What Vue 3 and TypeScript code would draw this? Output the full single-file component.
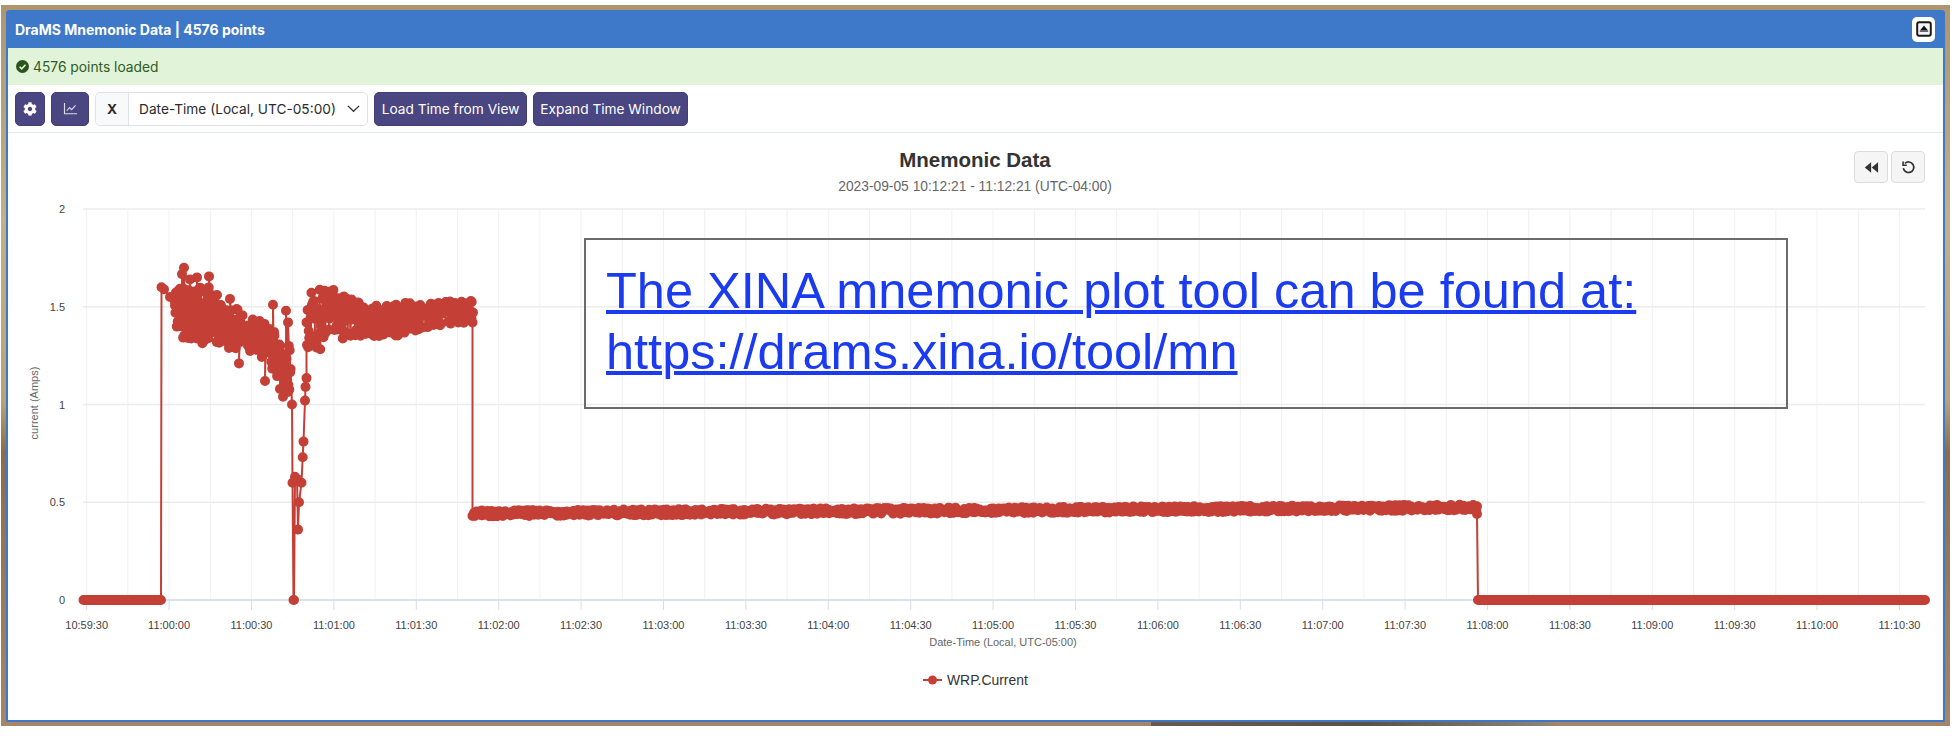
<template>
  <div class="desk">
    <section class="panel">
      <header class="panel-head">
        <span class="panel-title">DraMS Mnemonic Data | 4576 points</span>
        <button class="collapse" type="button" aria-label="Collapse">
          <svg viewBox="0 0 16 16" width="16" height="16">
            <rect x="1.2" y="1.2" width="13.6" height="13.6" rx="2" fill="#f4f4f4" stroke="#1a1a1a" stroke-width="2" />
            <path d="M8 4.6 12 9.6H4Z" fill="#111" />
            <rect x="3.8" y="9.6" width="8.4" height="1.2" fill="#444" />
          </svg>
        </button>
      </header>

      <div class="notice">
        <svg viewBox="0 0 16 16" width="13" height="13">
          <circle cx="8" cy="8" r="8" fill="#2b5320" />
          <path d="M4.4 8.3 7 10.8 11.7 5.8" fill="none" stroke="#e1f3d8" stroke-width="2" />
        </svg>
        <span>{{ pointCount }} points loaded</span>
      </div>

      <div class="toolbar">
        <button class="btn btn-icon" type="button" aria-label="Settings">
          <svg viewBox="0 0 512 512" width="14" height="14">
            <path fill="#fff" d="M487.4 315.7l-42.6-24.6c4.3-23.2 4.3-47 0-70.2l42.6-24.6c4.9-2.8 7.1-8.6 5.5-14-11.1-35.6-30-67.8-54.7-94.6-3.8-4.1-10-5.1-14.8-2.3L380.8 110c-17.9-15.4-38.5-27.3-60.8-35.1V25.8c0-5.6-3.9-10.5-9.4-11.7-36.7-8.2-74.3-7.8-109.2 0-5.5 1.2-9.4 6.1-9.4 11.7V75c-22.2 7.9-42.8 19.8-60.8 35.1L88.7 85.5c-4.9-2.8-11-1.9-14.8 2.3-24.7 26.7-43.6 58.9-54.7 94.6-1.7 5.4.6 11.2 5.5 14L67.3 221c-4.3 23.2-4.3 47 0 70.2l-42.6 24.6c-4.9 2.8-7.1 8.6-5.5 14 11.1 35.6 30 67.8 54.7 94.6 3.8 4.1 10 5.1 14.8 2.3l42.6-24.6c17.9 15.4 38.5 27.3 60.8 35.1v49.2c0 5.6 3.9 10.5 9.4 11.7 36.7 8.2 74.3 7.8 109.2 0 5.5-1.2 9.4-6.1 9.4-11.7v-49.2c22.2-7.9 42.8-19.8 60.8-35.1l42.6 24.6c4.9 2.8 11 1.9 14.8-2.3 24.7-26.7 43.6-58.9 54.7-94.6 1.5-5.5-.7-11.3-5.6-14.1zM256 336c-44.1 0-80-35.9-80-80s35.9-80 80-80 80 35.9 80 80-35.9 80-80 80z" />
          </svg>
        </button>
        <button class="btn btn-icon btn-chart" type="button" aria-label="Chart type">
          <svg viewBox="0 0 16 16" width="15" height="15" fill="none" stroke="#dcdbea" stroke-width="1.2">
            <path d="M1.6 2v11.6H15" />
            <path d="M4 10.4 7 7l2.2 2.2L13.4 4.6" />
          </svg>
        </button>
        <div class="axis-select">
          <span class="axis-tag">X</span>
          <span class="axis-value">Date-Time (Local, UTC-05:00)</span>
          <svg viewBox="0 0 16 16" width="15" height="15" fill="none" stroke="#333" stroke-width="1.4">
            <path d="M2 5.2 8 11l6-5.8" />
          </svg>
        </div>
        <button class="btn" type="button">Load Time from View</button>
        <button class="btn" type="button">Expand Time Window</button>
      </div>

      <div class="chart">
        <svg class="plot" viewBox="8 133 1935 586" width="1935" height="586">
          <g stroke="#f0f1f4" stroke-width="1">
            <line v-for="x in minorTicks" :key="x" :x1="x" :x2="x" y1="209" y2="600" />
          </g>
          <g stroke="#ececee" stroke-width="1.4">
            <line v-for="t in yTicks" :key="t.label" x1="83" x2="1925" :y1="t.y" :y2="t.y" />
          </g>
          <line x1="83" x2="1925" y1="600" y2="600" stroke="#d5ddee" stroke-width="1.5" />
          <g stroke="#d5ddee" stroke-width="1">
            <line v-for="t in xTicks" :key="t.label" :x1="t.x" :x2="t.x" y1="600" y2="610" />
          </g>

          <text class="title" x="975" y="167" text-anchor="middle">Mnemonic Data</text>
          <text class="subtitle" x="975" y="191" text-anchor="middle">2023-09-05 10:12:21 - 11:12:21 (UTC-04:00)</text>

          <text
            v-for="t in yTicks"
            :key="t.label"
            class="tick"
            x="65"
            :y="t.y + 4"
            text-anchor="end"
          >{{ t.label }}</text>
          <text
            v-for="t in xTicks"
            :key="t.label"
            class="tick"
            :x="t.x"
            y="629"
            text-anchor="middle"
          >{{ t.label }}</text>

          <text class="axis-title" x="1003" y="646" text-anchor="middle">Date-Time (Local, UTC-05:00)</text>
          <text class="axis-title" transform="translate(38 403) rotate(-90)" text-anchor="middle">current (Amps)</text>

          <path :d="seriesLine" fill="none" stroke="#c44036" stroke-width="2" stroke-linejoin="round" />
          <path :d="seriesDots" fill="none" stroke="#c44036" stroke-width="10" stroke-linecap="round" />

          <line x1="923" x2="942" y1="680" y2="680" stroke="#c44036" stroke-width="2" />
          <circle cx="932.5" cy="680" r="4.5" fill="#c44036" />
          <text class="legend" x="947" y="685">WRP.Current</text>
        </svg>

        <div class="chart-actions">
          <button class="btn-light" type="button" aria-label="Step back">
            <svg viewBox="0 0 16 16" width="15" height="15" fill="#333">
              <path d="M7.6 2.4v11.2L.8 8Z" />
              <path d="M15 2.4v11.2L8.2 8Z" />
            </svg>
          </button>
          <button class="btn-light" type="button" aria-label="Reset">
            <svg viewBox="0 0 16 16" width="15" height="15" fill="none" stroke="#333" stroke-width="1.8">
              <path d="M4.2 3.6A5.6 5.6 0 1 1 2.5 8.6" />
              <path d="M2.2 1.6v4h4" stroke-width="1.7" />
            </svg>
          </button>
        </div>

        <div class="callout">
          <a href="https://drams.xina.io/tool/mn">The XINA mnemonic plot tool can be found at:<br />https://drams.xina.io/tool/mn</a>
        </div>
      </div>
    </section>
  </div>
</template>

<script setup lang="ts">
import { computed } from 'vue'

interface Point {
  x: number
  v: number
}

const pointCount = 4576

const ZERO_Y = 600
const PX_PER_UNIT = 195.5
const FIRST_TICK_X = 86.7
const TICK_STEP = 82.4

const yOf = (v: number) => ZERO_Y - v * PX_PER_UNIT

const formatTime = (seconds: number) => {
  const pad = (n: number) => String(n).padStart(2, '0')
  const h = Math.floor(seconds / 3600)
  const m = Math.floor(seconds / 60) % 60
  return `${pad(h)}:${pad(m)}:${pad(seconds % 60)}`
}

const xTicks = computed(() =>
  Array.from({ length: 23 }, (_, i) => ({
    x: FIRST_TICK_X + i * TICK_STEP,
    label: formatTime(10 * 3600 + 59 * 60 + 30 + i * 30),
  })),
)

const minorTicks = computed(() =>
  Array.from({ length: 45 }, (_, i) => FIRST_TICK_X + (i * TICK_STEP) / 2),
)

const yTicks = computed(() =>
  [0, 0.5, 1, 1.5, 2].map((v) => ({ y: yOf(v), label: String(v) })),
)

// small seeded generator so the noise is the same on every render
const makeRandom = (seed: number) => () => {
  seed = (seed + 0x6d2b79f5) | 0
  let t = Math.imul(seed ^ (seed >>> 15), 1 | seed)
  t = (t + Math.imul(t ^ (t >>> 7), 61 | t)) ^ t
  return ((t ^ (t >>> 14)) >>> 0) / 4294967296
}

const lerpEnvelope = (stops: number[][], x: number) => {
  for (let i = 1; i < stops.length; i++) {
    if (x <= stops[i][0]) {
      const [x0, v0] = stops[i - 1]
      const [x1, v1] = stops[i]
      return v0 + ((x - x0) / (x1 - x0)) * (v1 - v0)
    }
  }
  return stops[stops.length - 1][1]
}

const series = computed<Point[]>(() => {
  const rand = makeRandom(42)
  const pts: Point[] = []

  for (let x = 83.5; x < 161; x += 1.5) pts.push({ x, v: 0 })
  pts.push({ x: 161, v: 0 }, { x: 161.5, v: 1.6 }, { x: 164, v: 1.59 }, { x: 170, v: 1.55 }, { x: 175, v: 1.52 })

  const firstTop = [[173, 1.6], [184, 1.64], [209, 1.6], [217, 1.52], [232, 1.5], [250, 1.46], [272, 1.39], [292, 1.3]]
  const firstLow = [[173, 1.36], [200, 1.31], [238, 1.28], [255, 1.26], [270, 1.2], [283, 1.08], [292, 1.05]]
  const spikes = [
    [184, 1.7], [182, 1.667], [190, 1.64], [197, 1.65], [209, 1.655], [217, 1.56], [230, 1.54],
    [239, 1.21], [265, 1.12], [273, 1.51], [280, 1.08], [283, 1.04], [286, 1.48], [288, 1.42],
  ]
  let nextSpike = 0
  for (let x = 175; x < 291; x += 0.45) {
    const lo = lerpEnvelope(firstLow, x)
    const hi = lerpEnvelope(firstTop, x)
    pts.push({ x, v: lo + rand() * (hi - lo) })
    const spike = [...spikes].sort((a, b) => a[0] - b[0])[nextSpike]
    if (spike && x >= spike[0]) {
      pts.push({ x: spike[0], v: spike[1] })
      nextSpike++
    }
  }

  pts.push(
    { x: 292, v: 1 }, { x: 292.5, v: 0.6 }, { x: 293.5, v: 0 }, { x: 294, v: 0 },
    { x: 295, v: 0.63 }, { x: 297, v: 0.62 }, { x: 298, v: 0.36 }, { x: 299, v: 0.5 },
    { x: 301.5, v: 0.6 }, { x: 302.7, v: 0.73 }, { x: 303.5, v: 0.81 }, { x: 305, v: 1.02 },
    { x: 305.5, v: 1.09 }, { x: 306.5, v: 1.135 }, { x: 306.5, v: 1.42 },
  )

  const secondTop = [[307, 1.52], [312, 1.59], [330, 1.6], [345, 1.56], [358, 1.56], [365, 1.5], [400, 1.52], [472, 1.53]]
  const secondLow = [[307, 1.28], [315, 1.27], [345, 1.3], [352, 1.345], [400, 1.345], [430, 1.4], [472, 1.42]]
  for (let x = 307; x < 472; x += 0.55) {
    const lo = lerpEnvelope(secondLow, x)
    const hi = lerpEnvelope(secondTop, x)
    pts.push({ x, v: lo + rand() * (hi - lo) })
  }
  pts.push({ x: 471.7, v: 1.525 }, { x: 473, v: 1.47 }, { x: 472.5, v: 1.42 }, { x: 472.5, v: 0.43 })

  for (let x = 474; x < 1477; x += 0.8) {
    const base = 0.428 + ((x - 474) / 1003) * 0.03
    pts.push({ x, v: base + rand() * 0.03 })
  }
  pts.push({ x: 1477, v: 0.48 }, { x: 1477, v: 0.44 }, { x: 1478, v: 0 })

  for (let x = 1478; x <= 1925.5; x += 1.5) pts.push({ x, v: 0 })
  return pts
})

const seriesLine = computed(() =>
  series.value.map((p, i) => `${i ? 'L' : 'M'}${p.x.toFixed(1)} ${yOf(p.v).toFixed(1)}`).join(''),
)

const seriesDots = computed(() =>
  series.value.map((p) => `M${p.x.toFixed(1)} ${yOf(p.v).toFixed(1)}h0`).join(''),
)
</script>

<style>
body {
  background: #fff;
}
</style>

<style scoped>
.desk {
  box-sizing: border-box;
  height: 721px;
  margin: 5px 4px 10px 1px;
  padding: 5px 5px 4px;
  background:
    linear-gradient(90deg, transparent 59%, #6b5a4c 59%, #5a5046 70%, #8a8274 79%, transparent 79.8%) bottom / 100% 4px no-repeat,
    linear-gradient(180deg, #ab9670 0%, #c2b088 30%, #b8a27c 55%, #8a6d4e 62%, #a5866a 100%);
}

.panel {
  box-sizing: border-box;
  height: 712px;
  display: flex;
  flex-direction: column;
  background: #fff;
  border: 2px solid #3f78c9;
  border-top: none;
  border-radius: 4px 4px 2px 2px;
  font-family: Inter, "Liberation Sans", sans-serif;
}

.panel-head {
  display: flex;
  align-items: center;
  justify-content: space-between;
  height: 38px;
  margin: 0 -2px;
  padding: 0 10px 0 9px;
  background: #3e78c8;
  border-radius: 4px 4px 0 0;
}

.panel-title {
  color: #fff;
  font-size: 14px;
  font-weight: 700;
}

.collapse {
  display: flex;
  align-items: center;
  justify-content: center;
  width: 23px;
  height: 25px;
  padding: 0;
  background: #fff;
  border: none;
  border-radius: 5px;
}

.notice {
  display: flex;
  align-items: center;
  gap: 4px;
  height: 37px;
  padding-left: 8px;
  background: #e1f3d8;
  color: #2f5a24;
  font-size: 13.8px;
}

.toolbar {
  display: flex;
  align-items: center;
  gap: 6px;
  height: 47px;
  padding: 0 7px;
  border-bottom: 1px solid #e3e8f0;
}

.btn {
  height: 34px;
  box-sizing: border-box;
  width: 153px;
  padding: 0;
  background: #4a4682;
  border: 1px solid #423e78;
  border-radius: 5px;
  color: #fff;
  font-family: inherit;
  font-size: 13.7px;
  white-space: nowrap;
}

.btn + .btn {
  width: 155px;
}

.btn.btn-icon {
  display: flex;
  align-items: center;
  justify-content: center;
  width: 30px;
  padding: 0;
}

.btn.btn-chart {
  width: 38px;
}

.axis-select {
  display: flex;
  align-items: center;
  width: 273px;
  height: 34px;
  box-sizing: border-box;
  border: 1px solid #dee2e6;
  border-radius: 5px;
  color: #2b2b2b;
  font-size: 13.7px;
}

.axis-tag {
  display: flex;
  align-items: center;
  justify-content: center;
  align-self: stretch;
  width: 32px;
  background: #f8f9fa;
  border-right: 1px solid #dee2e6;
  border-radius: 5px 0 0 5px;
  font-weight: 700;
}

.axis-value {
  flex: 1;
  padding-left: 10px;
  white-space: nowrap;
}

.axis-select svg {
  margin-right: 6px;
}

.chart {
  position: relative;
  flex: 1;
  min-height: 0;
  overflow: hidden;
}

.plot {
  display: block;
  font-family: "Liberation Sans", sans-serif;
}

.title {
  fill: #333;
  font-size: 20.5px;
  font-weight: 700;
}

.subtitle {
  fill: #666;
  font-size: 13.8px;
}

.tick {
  fill: #444;
  font-size: 11px;
}

.axis-title {
  fill: #666;
  font-size: 11px;
}

.legend {
  fill: #333;
  font-size: 13.9px;
}

.chart-actions {
  position: absolute;
  top: 18px;
  right: 18px;
  display: flex;
  gap: 3px;
}

.btn-light {
  display: flex;
  align-items: center;
  justify-content: center;
  width: 34px;
  height: 32px;
  padding: 0;
  background: #f5f5f5;
  border: 1px solid #dcdcdc;
  border-radius: 4px;
}

.callout {
  position: absolute;
  left: 576px;
  top: 105px;
  box-sizing: border-box;
  width: 1204px;
  height: 171px;
  padding: 20px 20px;
  border: 2px solid #6b6b6b;
  font-family: "Liberation Sans", sans-serif;
  font-size: 50.5px;
  line-height: 61px;
}

.callout a {
  color: #1a3bf0;
  text-decoration-thickness: 4px;
}
</style>
